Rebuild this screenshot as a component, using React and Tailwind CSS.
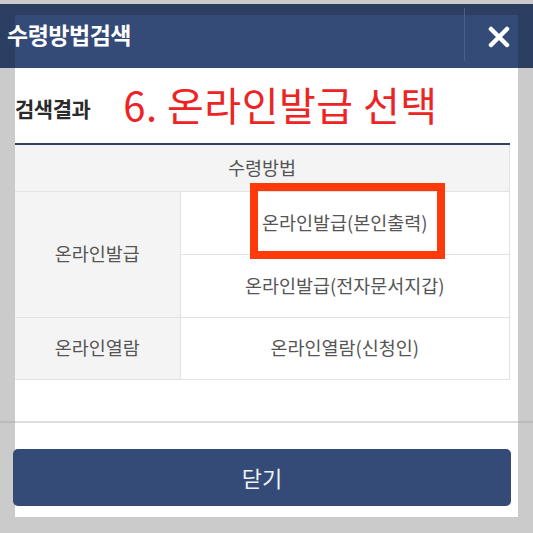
import React from "react";

const font = { fontFamily: '"Noto Sans CJK KR", "Noto Sans", sans-serif' };

const App = () => {
  return (
    <div className="w-full h-[533px] bg-[#cbcbcb] overflow-hidden" style={font}>
      <div className="h-[4px]" />

      {/* header band */}
      <div className="relative h-[64px] bg-[#2c3f62] px-[15px] pt-[11px]">
        <div className="h-[53px] bg-[#354b77]" />
        <div className="absolute left-[7px] top-[13px] text-[23px] leading-[34px] font-bold text-white tracking-[-0.5px]">
          수령방법검색
        </div>
        <div className="absolute left-[464px] top-[4px] h-[53px] w-px bg-[#4a5e86]" />
        <button className="absolute left-[486px] top-[20px] w-[26px] h-[26px] flex items-center justify-center">
          <svg width="22" height="22" viewBox="0 0 22 22">
            <path d="M3 3 L19 19 M19 3 L3 19" stroke="#fff" strokeWidth="4.5" strokeLinecap="round" />
          </svg>
        </button>
      </div>

      {/* body */}
      <div className="mx-[15px] h-[353px] bg-white pr-[8px]">
        <div className="flex items-center h-[75px] pt-[7px]">
          <span className="text-[21px] font-bold text-[#2b2b2b] tracking-[-0.5px]">검색결과</span>
          <span className="ml-[33px] -mt-[10px] text-[40px] text-[#ec2424] tracking-[0.5px]">6. 온라인발급 선택</span>
        </div>

        <div className="relative">
          <table className="w-full border-collapse border-t-2 border-t-[#2f4066] text-[18.5px] text-[#555]">
            <thead>
              <tr>
                <th colSpan={2} className="h-[47px] bg-[#f4f4f4] font-normal border-b border-r border-[#e2e2e2]">
                  수령방법
                </th>
              </tr>
            </thead>
            <tbody>
              <tr>
                <td rowSpan={2} className="w-[165px] bg-[#f4f4f4] text-center border border-l-0 border-[#e2e2e2]">
                  온라인발급
                </td>
                <td className="h-[63px] text-center border border-[#e2e2e2]">온라인발급(본인출력)</td>
              </tr>
              <tr>
                <td className="h-[63px] text-center border border-[#e2e2e2]">온라인발급(전자문서지갑)</td>
              </tr>
              <tr>
                <td className="h-[62px] bg-[#f4f4f4] text-center border border-l-0 border-[#e2e2e2]">온라인열람</td>
                <td className="text-center border border-[#e2e2e2]">온라인열람(신청인)</td>
              </tr>
            </tbody>
          </table>
          <div className="absolute left-[235px] top-[40px] w-[195px] h-[76px] border-[8px] border-[#fe3a0b]" />
        </div>
      </div>

      {/* divider line */}
      <div className="flex h-[2px]">
        <div className="w-[15px] bg-[#bcbcbc]" />
        <div className="flex-1 bg-[#dddddd]" />
        <div className="w-[15px] bg-[#bcbcbc]" />
      </div>

      {/* footer */}
      <div className="mx-[15px] h-[94px] bg-white pt-[26px]">
        <button className="-ml-[2px] w-[498px] h-[57px] rounded-[5px] bg-[#344b77] text-[22px] text-[#eef2fa]">
          닫기
        </button>
      </div>
    </div>
  );
};

export default App;
